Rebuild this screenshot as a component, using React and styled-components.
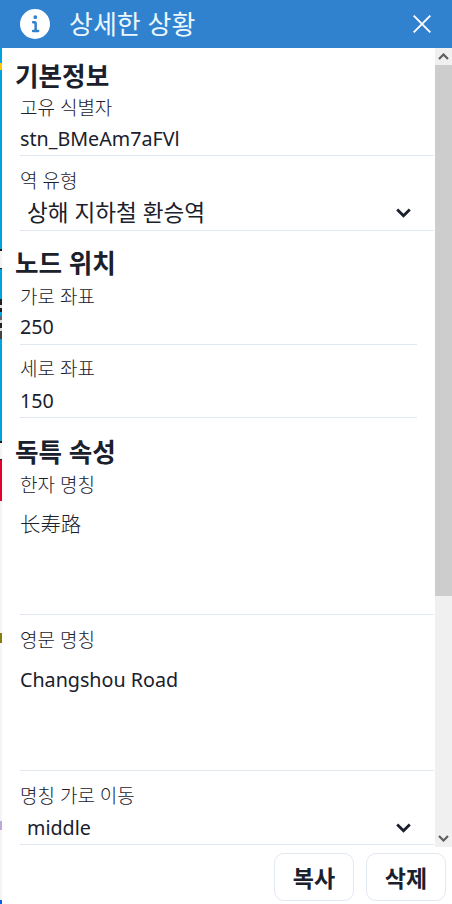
import React from 'react'
import styled, { createGlobalStyle } from 'styled-components'

const GlobalStyle = createGlobalStyle`
    html, body {
        margin: 0;
        padding: 0;
        height: 100%;
        overflow: hidden;
        background: #f4f4f4;
    }
    #root {
        height: 100%;
    }
`

const backdrop = [
    { height: 48, color: '#3182ce' },
    { height: 15, color: '#00a3e0' },
    { height: 7, color: '#ffc800' },
    { height: 179, color: '#00a3e0' },
    { height: 2, color: '#1a1a1a' },
    { height: 17, color: '#f4f4f4' },
    { height: 1, color: '#1a1a1a' },
    { height: 30, color: '#00a3e0' },
    { height: 6, color: '#222222' },
    { height: 3, color: '#dddddd' },
    { height: 4, color: '#222222' },
    { height: 4, color: '#00a3e0' },
    { height: 4, color: '#666666' },
    { height: 3, color: '#dddddd' },
    { height: 5, color: '#222222' },
    { height: 3, color: '#dddddd' },
    { height: 8, color: '#444444' },
    { height: 102, color: '#00a3e0' },
    { height: 2, color: '#1a1a1a' },
    { height: 16, color: '#f4f4f4' },
    { height: 1, color: '#1a1a1a' },
    { height: 41, color: '#e3002b' },
    { height: 132, color: '#f4f4f4' },
    { height: 10, color: '#857d10' },
    { height: 178, color: '#f4f4f4' },
    { height: 9, color: '#bca8dc' },
    { height: 70, color: '#f4f4f4' },
    { height: 8, color: '#0a5fe0' },
]

export default function App() {
    return (
        <Page>
            <GlobalStyle />
            <Backdrop>
                {backdrop.map((band, i) => (
                    <Band key={i} $height={band.height} $color={band.color} />
                ))}
            </Backdrop>
            <Drawer>
                <Header>
                    <InfoIcon viewBox="0 0 24 24">
                        <path
                            fill="currentColor"
                            d="M12,0A12,12,0,1,0,24,12,12.013,12.013,0,0,0,12,0Zm.25,5a1.5,1.5,0,1,1-1.5,1.5A1.5,1.5,0,0,1,12.25,5ZM14.5,18.5h-4a1,1,0,0,1,0-2h.75a.25.25,0,0,0,.25-.25v-4.5a.25.25,0,0,0-.25-.25H10.5a1,1,0,0,1,0-2h1a2,2,0,0,1,2,2v4.75a.25.25,0,0,0,.25.25h.75a1,1,0,1,1,0,2Z"
                        />
                    </InfoIcon>
                    <Title>상세한 상황</Title>
                    <CloseButton>
                        <svg width="18" height="18" viewBox="0 0 18 18">
                            <path d="M0.7 0.7L17.3 17.3M17.3 0.7L0.7 17.3" stroke="currentColor" strokeWidth="1.9" fill="none" />
                        </svg>
                    </CloseButton>
                </Header>
                <Body>
                    <Content>
                        <SectionTitle>기본정보</SectionTitle>
                        <Field $height={63}>
                            <Label $top={3}>고유 식별자</Label>
                            <Value $top={6}>stn_BMeAm7aFVl</Value>
                        </Field>
                        <Field $height={75}>
                            <Label>역 유형</Label>
                            <SelectValue $hangul>
                                상해 지하철 환승역
                                <Chevron />
                            </SelectValue>
                        </Field>

                        <SectionTitle $top={15}>노드 위치</SectionTitle>
                        <Field $height={65} $short>
                            <Label $top={5}>가로 좌표</Label>
                            <Value $top={5}>250</Value>
                        </Field>
                        <Field $height={73} $short>
                            <Label $top={12}>세로 좌표</Label>
                            <Value $top={7}>150</Value>
                        </Field>

                        <SectionTitle $top={17}>독특 속성</SectionTitle>
                        <Field $height={146}>
                            <Label $top={4}>한자 명칭</Label>
                            <Value $top={14} $hanzi>长寿路</Value>
                        </Field>
                        <Field $height={156}>
                            <Label>영문 명칭</Label>
                            <Value $top={15}>Changshou Road</Value>
                        </Field>
                        <Field $height={74}>
                            <Label>명칭 가로 이동</Label>
                            <SelectValue>
                                middle
                                <Chevron />
                            </SelectValue>
                        </Field>
                    </Content>
                    <Scrollbar>
                        <ScrollArrow>
                            <svg width="11" height="7" viewBox="0 0 11 7">
                                <path d="M1 6L5.5 1.5L10 6" stroke="#5f5f5f" strokeWidth="2.2" fill="none" />
                            </svg>
                        </ScrollArrow>
                        <ScrollThumb />
                        <ScrollArrow $bottom>
                            <svg width="11" height="7" viewBox="0 0 11 7">
                                <path d="M1 1L5.5 5.5L10 1" stroke="#5f5f5f" strokeWidth="2.2" fill="none" />
                            </svg>
                        </ScrollArrow>
                    </Scrollbar>
                </Body>
                <Footer>
                    <Button>복사</Button>
                    <Button>삭제</Button>
                </Footer>
            </Drawer>
        </Page>
    )
}

function Chevron() {
    return (
        <ChevronIcon width="15" height="10" viewBox="0 0 15 10">
            <path d="M1.2 1.5L7.5 7.8L13.8 1.5" stroke="currentColor" strokeWidth="2.8" fill="none" />
        </ChevronIcon>
    )
}

const Page = styled.div`
    display: flex;
    width: 452px;
    height: 904px;
    overflow: hidden;
    color: #1a202c;
    font-family: 'Noto Sans', 'Noto Sans CJK KR', sans-serif;
`

const Backdrop = styled.div`
    flex: 0 0 2px;
    display: flex;
    flex-direction: column;
`

const Band = styled.div`
    flex: 0 0 ${(p) => p.$height}px;
    background: ${(p) => p.$color};
`

const Drawer = styled.div`
    flex: 1;
    display: flex;
    flex-direction: column;
    background: #ffffff;
    min-width: 0;
`

const Header = styled.header`
    flex: 0 0 48px;
    display: flex;
    align-items: center;
    padding: 0 21px 0 18px;
    background: #3182ce;
    color: #ffffff;
`

const InfoIcon = styled.svg`
    width: 30px;
    height: 30px;
    flex: none;
`

const Title = styled.h2`
    margin: 0 0 0 19px;
    flex: 1;
    font-size: 26px;
    font-weight: 400;
    line-height: 48px;
    color: #ebf8ff;
`

const CloseButton = styled.div`
    display: flex;
    color: #ffffff;
`

const Body = styled.div`
    flex: 0 0 799px;
    display: flex;
    min-height: 0;
`

const Content = styled.div`
    flex: 1;
    min-width: 0;
    overflow: hidden;
    padding: 11px 1px 0 13px;
`

const SectionTitle = styled.h5`
    margin: ${(p) => p.$top || 0}px 0 0;
    padding-top: 1px;
    font-size: 25.6px;
    font-weight: 700;
    line-height: 33px;
`

const Field = styled.div`
    box-sizing: border-box;
    display: flex;
    flex-direction: column;
    height: ${(p) => p.$height}px;
    margin-left: 5px;
    margin-right: ${(p) => (p.$short ? 17 : 0)}px;
    border-bottom: 1px solid #e2e8f0;
`

const Label = styled.div`
    margin-top: ${(p) => p.$top || 13}px;
    font-size: 19px;
    font-weight: 300;
    line-height: 24px;
`

const Value = styled.div`
    margin-top: ${(p) => p.$top || 7}px;
    font-size: ${(p) => (p.$hanzi ? 20.4 : 19.7)}px;
    font-weight: ${(p) => (p.$hanzi ? 300 : 400)};
    line-height: 26px;
    white-space: nowrap;
`

const SelectValue = styled.div`
    display: flex;
    align-items: center;
    justify-content: space-between;
    margin-top: 6px;
    padding: 0 23px 0 7px;
    font-size: ${(p) => (p.$hangul ? 22.6 : 19.7)}px;
    line-height: 28px;
`

const ChevronIcon = styled.svg`
    flex: none;
`

const Scrollbar = styled.div`
    flex: 0 0 17px;
    display: flex;
    flex-direction: column;
    background: #f0f0f0;
`

const ScrollArrow = styled.div`
    flex: 0 0 17px;
    display: flex;
    align-items: center;
    justify-content: center;
    margin-top: ${(p) => (p.$bottom ? 'auto' : 0)};
`

const ScrollThumb = styled.div`
    flex: 0 0 531px;
    background: #cdcdcd;
`

const Footer = styled.footer`
    flex: 1;
    display: flex;
    justify-content: flex-end;
    align-items: flex-start;
    gap: 12px;
    padding: 6px 6px 0 0;
`

const Button = styled.button`
    box-sizing: border-box;
    width: 80px;
    height: 48px;
    padding: 0;
    background: #ffffff;
    border: 1px solid #e2e8f0;
    border-radius: 10px;
    color: #1a202c;
    font-family: inherit;
    font-size: 23px;
    font-weight: 700;
`
